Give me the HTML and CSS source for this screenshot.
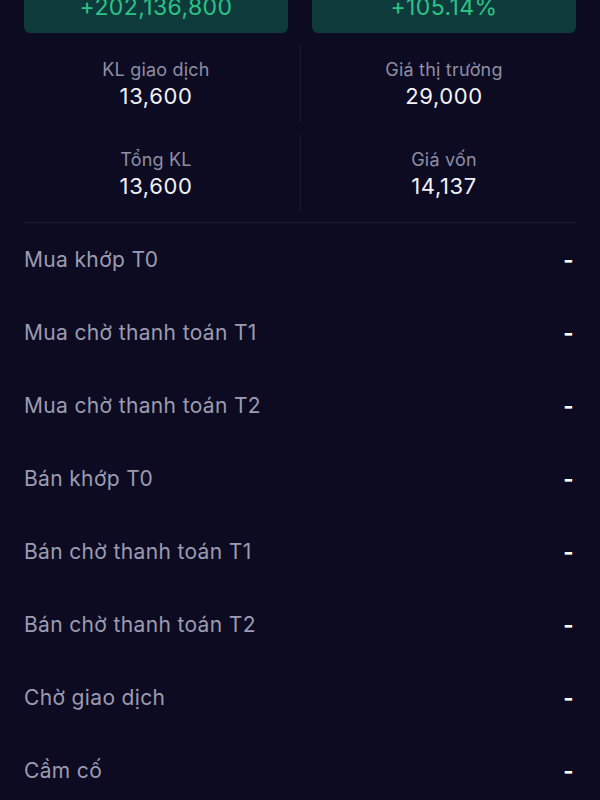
FILE: index.html
```html
<!DOCTYPE html>
<html lang="vi">
<head>
    <meta charset="UTF-8">
    <meta name="viewport" content="width=device-width, initial-scale=1.0">
    <title>Chi tiết danh mục</title>
    <link rel="stylesheet" href="styles.css">
</head>
<body>
    <main class="holding">
        <section class="summary">
            <div class="summary-card">
                <span class="summary-value">+202,136,800</span>
            </div>
            <div class="summary-card">
                <span class="summary-value">+105.14%</span>
            </div>
        </section>

        <section class="stats">
            <div class="stat">
                <span class="stat-label">KL giao dịch</span>
                <span class="stat-value">13,600</span>
            </div>
            <div class="stat-divider"></div>
            <div class="stat">
                <span class="stat-label">Giá thị trường</span>
                <span class="stat-value">29,000</span>
            </div>
            <div class="stat">
                <span class="stat-label">Tổng KL</span>
                <span class="stat-value">13,600</span>
            </div>
            <div class="stat-divider"></div>
            <div class="stat">
                <span class="stat-label">Giá vốn</span>
                <span class="stat-value">14,137</span>
            </div>
        </section>

        <ul class="detail-list">
            <li class="detail-row"><span>Mua khớp T0</span><span class="detail-value">-</span></li>
            <li class="detail-row"><span>Mua chờ thanh toán T1</span><span class="detail-value">-</span></li>
            <li class="detail-row"><span>Mua chờ thanh toán T2</span><span class="detail-value">-</span></li>
            <li class="detail-row"><span>Bán khớp T0</span><span class="detail-value">-</span></li>
            <li class="detail-row"><span>Bán chờ thanh toán T1</span><span class="detail-value">-</span></li>
            <li class="detail-row"><span>Bán chờ thanh toán T2</span><span class="detail-value">-</span></li>
            <li class="detail-row"><span>Chờ giao dịch</span><span class="detail-value">-</span></li>
            <li class="detail-row"><span>Cầm cố</span><span class="detail-value">-</span></li>
        </ul>
    </main>
</body>
</html>
```

FILE: styles.css
```css
    body {
        font-family: 'Inter', 'Noto Sans', sans-serif;
        background-color: #0c0b21;
        color: #f0f0f5;
        margin: 0;
        padding: 0;
        overflow: hidden;
    }

    .holding {
        padding: 0 24px;
    }

    /* Profit cards */
    .summary {
        display: grid;
        grid-template-columns: 1fr 1fr;
        column-gap: 24px;
        margin-top: -20px;
    }

    .summary-card {
        background-color: #0e3a3c;
        border-radius: 6px;
        padding: 14px 0 12px;
        text-align: center;
    }

    .summary-value {
        display: block;
        color: #2bc384;
        font-size: 23px;
        line-height: 27px;
        letter-spacing: 0.4px;
    }

    /* Stats grid */
    .stats {
        display: grid;
        grid-template-columns: 1fr 1px 1fr;
        column-gap: 11.5px;
        row-gap: 13px;
        margin-top: 12px;
        padding-bottom: 10px;
        border-bottom: 1px solid #1d1c33;
    }

    .stat {
        height: 77px;
        display: flex;
        flex-direction: column;
        align-items: center;
        justify-content: center;
    }

    .stat-label {
        color: #8f8ea4;
        font-size: 18px;
        line-height: 24px;
        letter-spacing: 0.2px;
    }

    .stat-value {
        color: #f2f2f7;
        font-size: 22px;
        line-height: 28px;
        letter-spacing: 0.6px;
    }

    .stat-divider {
        background-color: #1a1930;
    }

    /* Detail rows */
    .detail-list {
        list-style: none;
        margin: 0;
        padding: 0;
    }

    .detail-row {
        height: 73px;
        display: flex;
        align-items: center;
        justify-content: space-between;
        color: #9c9bb1;
        font-size: 21px;
        letter-spacing: 0.35px;
    }

    .detail-value {
        color: #ffffff;
        font-weight: bold;
        font-size: 22px;
        padding-right: 2px;
    }
```
